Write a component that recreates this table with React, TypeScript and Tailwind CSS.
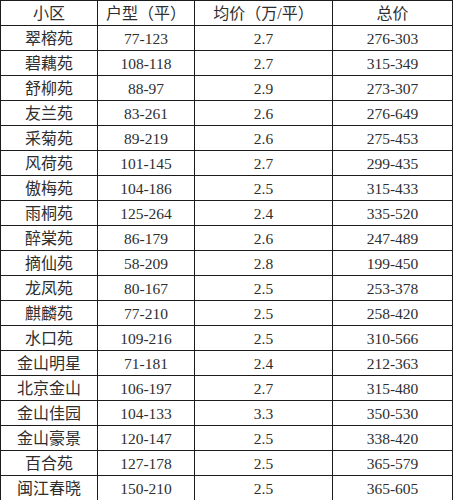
const rows: [string, string, string, string][] = [
  ["翠榕苑", "77-123", "2.7", "276-303"],
  ["碧藕苑", "108-118", "2.7", "315-349"],
  ["舒柳苑", "88-97", "2.9", "273-307"],
  ["友兰苑", "83-261", "2.6", "276-649"],
  ["采菊苑", "89-219", "2.6", "275-453"],
  ["风荷苑", "101-145", "2.7", "299-435"],
  ["傲梅苑", "104-186", "2.5", "315-433"],
  ["雨桐苑", "125-264", "2.4", "335-520"],
  ["醉棠苑", "86-179", "2.6", "247-489"],
  ["摘仙苑", "58-209", "2.8", "199-450"],
  ["龙凤苑", "80-167", "2.5", "253-378"],
  ["麒麟苑", "77-210", "2.5", "258-420"],
  ["水口苑", "109-216", "2.5", "310-566"],
  ["金山明星", "71-181", "2.4", "212-363"],
  ["北京金山", "106-197", "2.7", "315-480"],
  ["金山佳园", "104-133", "3.3", "350-530"],
  ["金山豪景", "120-147", "2.5", "338-420"],
  ["百合苑", "127-178", "2.5", "365-579"],
  ["闽江春晓", "150-210", "2.5", "365-605"],
];

const cell = "border-[1.5px] border-[#1c1c1c] p-0 pt-[2px] text-center align-middle";

export default function App() {
  return (
    <div className="w-[455px] h-[500px] bg-white overflow-hidden">
      <table className="table-fixed border-collapse w-[452px] text-[15.5px] leading-none text-[#2e2e2e] [font-family:'Liberation_Serif','Noto_Sans_CJK_SC',serif]">
        <colgroup>
          <col className="w-[97px]" />
          <col className="w-[97px]" />
          <col className="w-[138px]" />
          <col className="w-[120px]" />
        </colgroup>
        <thead>
          <tr className="h-[25px] text-[16px]">
            <th className={`${cell} font-normal`}>小区</th>
            <th className={`${cell} font-normal`}>户型（平）</th>
            <th className={`${cell} font-normal`}>均价（万/平）</th>
            <th className={`${cell} font-normal`}>总价</th>
          </tr>
        </thead>
        <tbody>
          {rows.map((r) => (
            <tr key={r[0]} className="h-[25px]">
              {r.map((v, i) => (
                <td key={i} className={`${cell} ${i === 0 ? "text-[16px]" : ""}`}>
                  {v}
                </td>
              ))}
            </tr>
          ))}
        </tbody>
      </table>
    </div>
  );
}
